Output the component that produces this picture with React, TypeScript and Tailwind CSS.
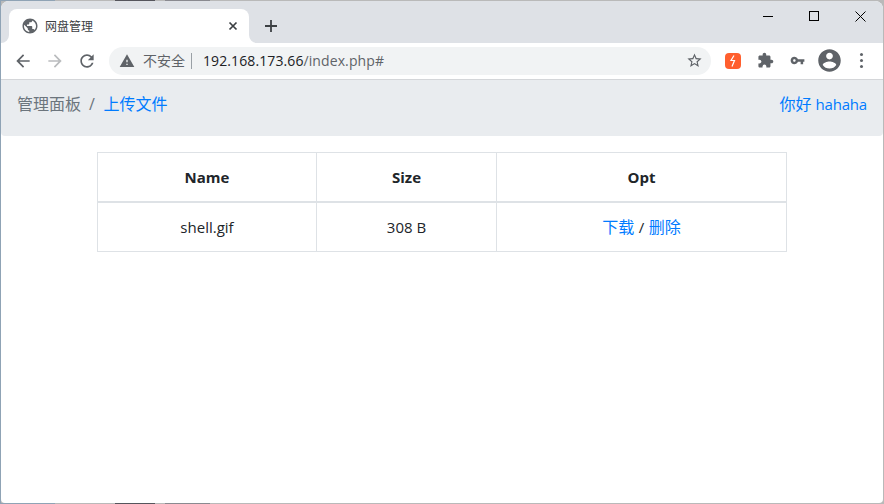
const Icon = ({ d, size = 24, className = '' }: { d: string; size?: number; className?: string }) => (
  <svg width={size} height={size} viewBox="0 0 24 24" fill="currentColor" className={className}>
    <path d={d} />
  </svg>
)

const icons = {
  back: 'M20 11H7.83l5.59-5.59L12 4l-8 8 8 8 1.41-1.41L7.83 13H20v-2z',
  forward: 'M12 4l-1.41 1.41L16.17 11H4v2h12.17l-5.58 5.59L12 20l8-8z',
  reload: 'M17.65 6.35C16.2 4.9 14.21 4 12 4c-4.42 0-7.99 3.58-7.99 8s3.57 8 7.99 8c3.73 0 6.84-2.55 7.73-6h-2.08c-.82 2.33-3.04 4-5.65 4-3.31 0-6-2.69-6-6s2.69-6 6-6c1.66 0 3.14.69 4.22 1.78L13 11h7V4l-2.35 2.35z',
  warning: 'M1 21h22L12 2 1 21zm12-3h-2v-2h2v2zm0-4h-2v-4h2v4z',
  star: 'M22 9.24l-7.19-.62L12 2 9.19 8.63 2 9.24l5.46 4.73L5.82 21 12 17.27 18.18 21l-1.63-7.03L22 9.24zM12 15.4l-3.76 2.27 1-4.28-3.32-2.88 4.38-.38L12 6.1l1.71 4.04 4.38.38-3.32 2.88 1 4.28L12 15.4z',
  puzzle: 'M20.5 11H19V7c0-1.1-.9-2-2-2h-4V3.5C13 2.12 11.88 1 10.5 1S8 2.12 8 3.5V5H4c-1.1 0-1.99.9-1.99 2v3.8H3.5c1.49 0 2.7 1.21 2.7 2.7s-1.21 2.7-2.7 2.7H2V20c0 1.1.9 2 2 2h3.8v-1.5c0-1.49 1.21-2.7 2.7-2.7 1.49 0 2.7 1.21 2.7 2.7V22H17c1.1 0 2-.9 2-2v-4h1.5c1.38 0 2.5-1.12 2.5-2.5S21.88 11 20.5 11z',
  key: 'M12.65 10C11.83 7.67 9.61 6 7 6c-3.31 0-6 2.69-6 6s2.69 6 6 6c2.61 0 4.83-1.67 5.65-4H17v4h4v-4h2v-4H12.65zM7 14c-1.1 0-2-.9-2-2s.9-2 2-2 2 .9 2 2-.9 2-2 2z',
  account: 'M12 2C6.48 2 2 6.48 2 12s4.48 10 10 10 10-4.48 10-10S17.52 2 12 2zm0 3c1.66 0 3 1.34 3 3s-1.34 3-3 3-3-1.34-3-3 1.34-3 3-3zm0 14.2c-2.5 0-4.71-1.28-6-3.22.03-1.99 4-3.08 6-3.08 1.99 0 5.97 1.09 6 3.08-1.29 1.94-3.5 3.22-6 3.22z',
  globe: 'M12 2C6.48 2 2 6.48 2 12s4.48 10 10 10 10-4.48 10-10S17.52 2 12 2zm-1 17.93c-3.95-.49-7-3.85-7-7.93 0-.62.08-1.21.21-1.79L9 15v1c0 1.1.9 2 2 2v1.93zm6.9-2.54c-.26-.81-1-1.39-1.9-1.39h-1v-3c0-.55-.45-1-1-1H8v-2h2c.55 0 1-.45 1-1V7h2c1.1 0 2-.9 2-2v-.41c2.93 1.19 5 4.06 5 7.41 0 2.08-.8 3.97-2.1 5.39z',
}

// 1px of desktop showing above and below the window
function DesktopEdge() {
  return (
    <div className="flex h-px shrink-0 bg-[#b9b9b9]">
      <div className="w-[55px] bg-[#8fa3b5]" />
      <div className="ml-[60px] w-[40px] bg-[#55555c]" />
      <div className="ml-[10px] w-[45px] bg-[#8a8a90]" />
    </div>
  )
}

function TabBar() {
  return (
    <div className="flex h-[42px] shrink-0 bg-[#dee1e6] pl-2">
      <div className="relative mt-2 flex h-[34px] w-[240px] items-center rounded-t-lg bg-white pl-3 pr-[11px]">
        <svg width="8" height="8" viewBox="0 0 8 8" className="absolute bottom-0 left-[-8px]">
          <path d="M8 0v8H0a8 8 0 0 0 8-8z" fill="#fff" />
        </svg>
        <svg width="8" height="8" viewBox="0 0 8 8" className="absolute bottom-0 right-[-8px]">
          <path d="M0 0v8h8a8 8 0 0 1-8-8z" fill="#fff" />
        </svg>
        <Icon d={icons.globe} size={18} className="text-[#5f6368]" />
        <span className="ml-[6px] flex-1 pt-[2px] text-xs text-[#3c4043]">网盘管理</span>
        <svg width="10" height="10" viewBox="0 0 10 10" className="text-[#3c4043]">
          <path d="M1.5 1.5l7 7M8.500 1.5l-7 7" stroke="currentColor" strokeWidth="1.700" />
        </svg>
      </div>
      <svg width="14" height="14" viewBox="0 0 14 14" className="ml-[15px] mt-[18px] text-[#3c4043]">
        <path d="M7 1v12M1 7h12" stroke="currentColor" strokeWidth="1.800" />
      </svg>
      <div className="ml-auto flex">
        <div className="flex h-[30px] w-[46px] items-center justify-center">
          <div className="h-px w-[10px] bg-black" />
        </div>
        <div className="flex h-[30px] w-[46px] items-center justify-center">
          <div className="h-[10px] w-[10px] border border-black" />
        </div>
        <div className="flex h-[30px] w-[46px] items-center justify-center">
          <svg width="11" height="11" viewBox="0 0 11 11">
            <path d="M.5.5l10 10M10.500.5l-10 10" stroke="#000" strokeWidth="1" />
          </svg>
        </div>
      </div>
    </div>
  )
}

function Toolbar() {
  return (
    <div className="flex h-[37px] shrink-0 items-center border-b border-[#d4d6d9] bg-white pb-px">
      <Icon d={icons.back} size={20} className="ml-3 text-[#5f6368]" />
      <Icon d={icons.forward} size={20} className="ml-[12px] text-[#babcbe]" />
      <Icon d={icons.reload} size={20} className="ml-[12px] text-[#5f6368]" />
      <div className="ml-3 flex h-7 w-[602px] items-center rounded-full bg-[#f1f3f4] pl-[10px] pr-2">
        <Icon d={icons.warning} size={16} className="text-[#5f6368]" />
        <span className="ml-2 text-sm leading-none text-[#5f6368]">不安全</span>
        <div className="ml-[6px] h-4 w-px bg-[#9aa0a6]" />
        <span className="ml-[11px] flex-1 text-sm tracking-[.1px] text-[#202124]">
          192.168.173.66<span className="text-[#5f6368]">/index.php#</span>
        </span>
        <Icon d={icons.star} size={17} className="text-[#5f6368]" />
      </div>
      <div className="ml-[14px] flex h-4 w-4 items-center justify-center rounded-sm bg-[#ff5f2e]">
        <svg width="8" height="12" viewBox="0 0 8 12">
          <path d="M5 .5L2 5.500h3.500L3 11.500" fill="none" stroke="#fff" strokeWidth="1.200" />
        </svg>
      </div>
      <Icon d={icons.puzzle} size={17} className="ml-4 text-[#5f6368]" />
      <Icon d={icons.key} size={15} className="ml-[16px] text-[#5f6368]" />
      <Icon d={icons.account} size={27} className="ml-[11px] text-[#5f6368]" />
      <div className="ml-[17px] flex flex-col gap-[3px]">
        <div className="h-[3px] w-[3px] rounded-full bg-[#5f6368]" />
        <div className="h-[3px] w-[3px] rounded-full bg-[#5f6368]" />
        <div className="h-[3px] w-[3px] rounded-full bg-[#5f6368]" />
      </div>
    </div>
  )
}

function Breadcrumb() {
  return (
    <div className="flex h-14 shrink-0 items-start justify-between rounded-b-[4px] bg-[#e9ecef] px-4 pt-3 text-base leading-6">
      <div className="flex">
        <a className="text-[#6c757d]">管理面板</a>
        <span className="pl-2 pr-[8.500px] text-[#6c757d]">/</span>
        <a className="text-[#007bff]">上传文件</a>
      </div>
      <a className="text-[#007bff]">
        你好 <span className="text-[15px] tracking-[-.2px]">hahaha</span>
      </a>
    </div>
  )
}

function FileTable() {
  const cell = 'border border-[#dee2e6] p-0 text-center'
  return (
    <table className="mx-auto mt-4 w-[690px] table-fixed border-collapse text-[15px] text-[#212529]">
      <thead>
        <tr>
          <th className={`${cell} h-[49px] w-[219px] border-b-2`}>Name</th>
          <th className={`${cell} h-[49px] w-[180px] border-b-2`}>Size</th>
          <th className={`${cell} h-[49px] border-b-2`}>Opt</th>
        </tr>
      </thead>
      <tbody>
        <tr>
          <td className={`${cell} h-[50px]`}>shell.gif</td>
          <td className={`${cell} h-[50px]`}>308 B</td>
          <td className={`${cell} h-[50px]`}>
            <a className="text-base text-[#007bff]">下载</a>
            <span className="mx-[.5px]"> / </span>
            <a className="text-base text-[#007bff]">删除</a>
          </td>
        </tr>
      </tbody>
    </table>
  )
}

export default function App() {
  return (
    <div className="flex h-[504px] w-[884px] flex-col overflow-hidden font-['Open_Sans','Noto_Sans_CJK_SC',sans-serif]">
      <DesktopEdge />
      <div className="flex min-h-0 flex-1 flex-col overflow-hidden border-x border-l-[#8fa3b5] border-r-[#b9b9b9] bg-[#b9b9b9]">
        <div className="flex h-full flex-col overflow-hidden rounded-t-lg rounded-b-[4px] bg-white">
          <TabBar />
          <Toolbar />
          <Breadcrumb />
          <FileTable />
        </div>
      </div>
      <DesktopEdge />
    </div>
  )
}
